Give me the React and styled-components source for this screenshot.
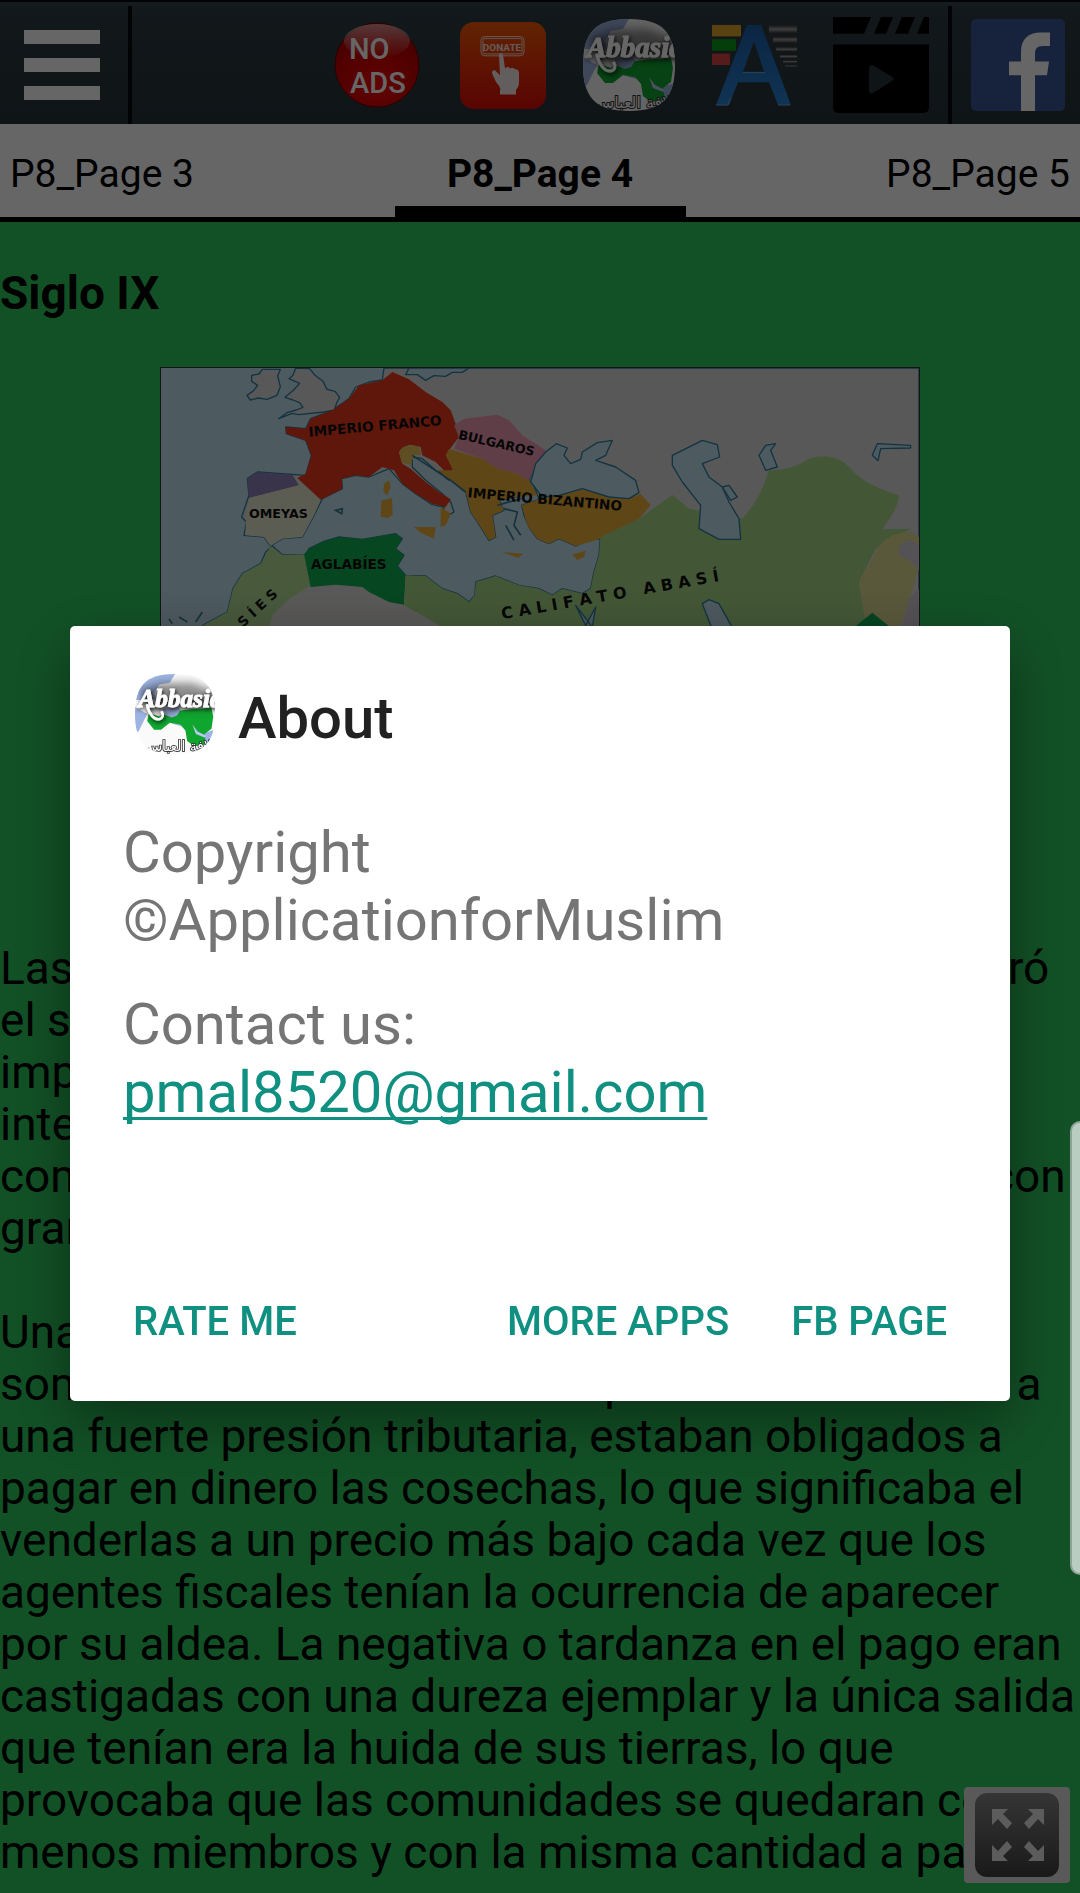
import React from "react";
import styled, { createGlobalStyle } from "styled-components";

const GlobalStyle = createGlobalStyle`
  *, *::before, *::after { box-sizing: border-box; }
  body { margin: 0; background: #2dcb5f; font-family: Roboto, "Liberation Sans", sans-serif; }
  button { font: inherit; border: 0; padding: 0; background: none; cursor: pointer; }
  h1, h2, p { margin: 0; font-weight: inherit; }
`;

const Screen = styled.div`
  height: 100vh;
  overflow: hidden;
  display: flex;
  flex-direction: column;
  background: #2dcb5f;
  color: #000;
`;

const Toolbar = styled.header`
  flex: none;
  height: 124px;
  padding-top: 4px;
  display: flex;
  border-top: 2px solid #04080c;
  background: linear-gradient(#38454d 0, #2f3c44 10px, #27333a 100%);
`;

const ToolButton = styled.button`
  width: ${(p) => p.$width}px;
  display: flex;
  align-items: center;
  justify-content: center;
  svg { display: block; }
`;

const Divider = styled.div`
  width: 4px;
  margin: 0 4px;
  background: #04080c;
`;

const ToolGroup = styled.div`
  margin-left: auto;
  display: flex;
`;

const Tabs = styled.nav`
  flex: none;
  height: 98px;
  display: grid;
  grid-template-columns: 1fr 291px 1fr;
  background: #fff;
  border-bottom: 5px solid #000;
`;

const Tab = styled.button`
  padding: 18px 10px 0;
  font-size: 39px;
  line-height: 48px;
  color: #000;
  text-align: ${(p) => p.$align};
  font-weight: ${(p) => (p.$active ? 700 : 400)};
  border-bottom: 11px solid ${(p) => (p.$active ? "#000" : "transparent")};
`;

const Article = styled.main`
  padding-top: 45px;
  font-size: 46px;
  line-height: 52px;
`;

const Heading = styled.h1`
  font-size: 46px;
  font-weight: 700;
`;

const MapFigure = styled.figure`
  margin: 48px auto 0;
  width: 100%;
  max-width: 760px;
  border: 1px solid #333;
  svg { display: block; width: 100%; height: auto; }
`;

const Paragraph = styled.p`
  white-space: pre-line;
  margin-top: ${(p) => p.$gap}px;
`;

const FullscreenButton = styled.button`
  position: fixed;
  right: 10px;
  bottom: 10px;
  width: 106px;
  height: 96px;
  border-radius: 4px;
  background: #dedede;
  display: flex;
  align-items: center;
  justify-content: center;
`;

const Scrim = styled.div`
  position: fixed;
  inset: 0;
  padding: 134px 70px 0;
  display: flex;
  align-items: center;
  justify-content: center;
  background: rgba(0, 0, 0, 0.6);
`;

const Dialog = styled.section`
  width: 100%;
  max-width: 940px;
  padding: 48px 53px 31px;
  border-radius: 5px;
  background: #fff;
  box-shadow: 0 20px 60px rgba(0, 0, 0, 0.4);
`;

const DialogHeader = styled.div`
  display: flex;
  align-items: flex-end;
  gap: 23px;
  padding-left: 12px;
  svg { display: block; }
`;

const DialogTitle = styled.h2`
  font-size: 58px;
  line-height: 72px;
  font-weight: 500;
  color: #212121;
`;

const DialogBody = styled.div`
  margin: 64px 0 148px;
  display: grid;
  gap: 36px;
  font-size: 58px;
  line-height: 68px;
  color: #757575;
`;

const MailLink = styled.a`
  color: #0f9080;
  text-decoration: underline;
  text-decoration-thickness: 3px;
  text-underline-offset: 5px;
  text-decoration-skip-ink: none;
`;

const Actions = styled.div`
  display: flex;
  gap: 42px;
`;

const ActionButton = styled.button`
  height: 96px;
  padding: 0 10px;
  font-size: 40px;
  line-height: 48px;
  font-weight: 500;
  color: #0f9080;
  margin-right: ${(p) => (p.$pushRest ? "auto" : "0")};
`;

const EdgeHandle = styled.div`
  position: fixed;
  right: 0;
  top: 1121px;
  width: 10px;
  height: 454px;
  border: 2px solid #8ba294;
  border-right: 0;
  border-radius: 10px 0 0 10px;
  background: #b9cdc0;
`;

function MenuIcon() {
  return (
    <svg width="76" height="70" viewBox="0 0 76 70" fill="#fff">
      <rect width="76" height="14" />
      <rect y="28" width="76" height="14" />
      <rect y="56" width="76" height="14" />
    </svg>
  );
}

function NoAdsIcon() {
  return (
    <svg width="86" height="86" viewBox="0 0 86 86">
      <defs>
        <radialGradient id="noAdsBall" cx=".5" cy=".75" r=".75">
          <stop offset="0" stopColor="#f50a0a" />
          <stop offset=".7" stopColor="#c60000" />
          <stop offset="1" stopColor="#a80000" />
        </radialGradient>
        <linearGradient id="noAdsShine" x1="0" y1="0" x2="0" y2="1">
          <stop offset="0" stopColor="#fff" stopOpacity=".55" />
          <stop offset="1" stopColor="#fff" stopOpacity="0" />
        </linearGradient>
      </defs>
      <circle cx="43" cy="43" r="42" fill="url(#noAdsBall)" stroke="#6b0000" />
      <ellipse cx="43" cy="19" rx="33" ry="17" fill="url(#noAdsShine)" />
      <g fill="#fff" fontFamily="Roboto, sans-serif" fontWeight="500" fontSize="29">
        <text x="15" y="37">NO</text>
        <text x="16" y="71">ADS</text>
      </g>
    </svg>
  );
}

function DonateIcon() {
  return (
    <svg width="88" height="87" viewBox="0 0 88 90" preserveAspectRatio="none">
      <defs>
        <linearGradient id="donateBg" x1="0" y1="0" x2="0" y2="1">
          <stop offset="0" stopColor="#f35a08" />
          <stop offset="1" stopColor="#e00a05" />
        </linearGradient>
      </defs>
      <rect x="1" width="86" height="90" rx="14" fill="url(#donateBg)" />
      <rect x="22" y="15" width="43" height="20" rx="4" fill="none" stroke="#f8d8d0" strokeWidth="1" />
      <rect x="24" y="17" width="39" height="16" rx="2" fill="none" stroke="#f8d8d0" strokeWidth="1" />
      <text x="43" y="30" textAnchor="middle" fontFamily="'Liberation Sans Narrow', Roboto, sans-serif" fontWeight="700" fontSize="10" fill="#f8e4de">DONATE</text>
      <path d="M40 34q2-4 4 0l2 14q3-3 5 0q3-2 5 1q3-1 4 3v10q0 6-4 9H42q-1-5-5-9l-4-9q0-4 3-3l5 5z" fill="#f5ecec" />
      <path d="M41 67h16v1.500H41zM41 70h16v5H41z" fill="#f5ecec" />
    </svg>
  );
}

function AbbasidLogo({ width, height, id }) {
  const clip = `abbasid-clip-${id}`;
  const shade = `abbasid-shade-${id}`;
  return (
    <svg width={width} height={height} viewBox="0 0 92 92">
      <defs>
        <clipPath id={clip}>
          <path d="M46 0C80 0 92 14 92 46S80 92 46 92S0 78 0 46S12 0 46 0z" />
        </clipPath>
        <filter id={shade} x="-30%" y="-30%" width="160%" height="160%">
          <feDropShadow dx="1" dy="2" stdDeviation="2.500" floodColor="#000" floodOpacity=".95" />
        </filter>
        <filter id={`${shade}-soft`} x="-30%" y="-30%" width="160%" height="160%">
          <feGaussianBlur stdDeviation="5" />
        </filter>
      </defs>
      <g clipPath={`url(#${clip})`}>
        <rect width="92" height="92" fill="#fafafa" />
        <path d="M0 0h46l-6 10l-12 2l-6 10l4 8H0zM0 38l14 8l-4 8l-6 12H0zM32 40l18-2l6 8l-2 14l-8-2l-12-4zM78 68l14-4v28l-12-8z" fill="#9db4e2" />
        <path d="M52 42l18-2l18-1l2 10l-2 14l-8 6l2 12l-14 2l-8-6l-2-12l-6-7l-12-2l-10 8h-8l-8-10l2-9l12 4l4-3l10 4l6-2z" fill="#0fa630" />
        <path d="M66 58l6 8l10 5l-2 2l-10-4z" fill="#b7c8ee" />
        <path d="M4 18L30 10h36l26 10v20H50L36 48L16 42z" fill="#222" opacity=".5" filter={`url(#${shade}-soft)`} />
        <g filter={`url(#${shade})`}>
          <text x="4" y="38" fontFamily="'Liberation Serif', serif" fontStyle="italic" fontWeight="700" fontSize="29" fill="#fff" stroke="#fff" strokeWidth="1">Abbasid</text>
          <path d="M14 36c2 10 8 17 14 16c4-1 5-5 3-8" fill="none" stroke="#fff" strokeWidth="3" strokeLinecap="round" />
        </g>
        <text x="50" y="89" textAnchor="middle" direction="rtl" fontFamily="'DejaVu Sans', sans-serif" fontSize="16" fill="#fff" stroke="#333" strokeWidth="2" paintOrder="stroke">لافة العباس</text>
      </g>
    </svg>
  );
}

function TextStyleIcon() {
  return (
    <svg width="86" height="82" viewBox="0 0 86 86" preserveAspectRatio="none">
      <defs>
        <linearGradient id="letterBlue" x1="0" y1="0" x2="0" y2="1">
          <stop offset="0" stopColor="#1c5fa8" />
          <stop offset="1" stopColor="#2a80d2" />
        </linearGradient>
        <linearGradient id="barGrey" x1="0" y1="0" x2="0" y2="1">
          <stop offset="0" stopColor="#333" />
          <stop offset=".5" stopColor="#999" />
          <stop offset="1" stopColor="#333" />
        </linearGradient>
      </defs>
      <rect x="0" y="1" width="29" height="12" fill="#dfa52f" />
      <rect x="0" y="16" width="24" height="12" fill="#0c9d1c" />
      <rect x="0" y="31" width="18" height="12" fill="#d64545" />
      <g fill="url(#barGrey)">
        <rect x="57" y="1" width="28" height="9" />
        <rect x="61" y="13" width="24" height="7" />
        <rect x="64" y="24" width="21" height="5" />
        <rect x="68" y="32" width="17" height="4" />
        <rect x="71" y="38" width="14" height="3" />
        <rect x="73" y="43" width="12" height="2" />
      </g>
      <path fillRule="evenodd" d="M4 85L35 1h14l30 84H66L57 61H26L17 85zM31 50h21L42 18z" fill="url(#letterBlue)" />
      <path d="M4 85h12l3-8M66 85h12M31 51h22" fill="none" stroke="#69a9e4" strokeWidth="1" />
    </svg>
  );
}

function ClapperIcon() {
  return (
    <svg width="96" height="96" viewBox="0 0 96 98" preserveAspectRatio="none">
      <path d="M0 0h38l-7 17H0zM48 0h12l-7 17H41zM69 0h13l-7 17H62zM91 0h5v17H84zM0 28h96v64q0 6-6 6H6q-6 0-6-6z" fill="#000" />
      <path d="M36 53q0-6 5-3l18 11q3 2 0 4L41 77q-5 3-5-3z" fill="#27343b" />
    </svg>
  );
}

function FacebookIcon() {
  return (
    <svg width="94" height="92" viewBox="0 0 94 95" preserveAspectRatio="none">
      <rect width="94" height="95" rx="5" fill="#3b5998" />
      <path d="M50 95V58H38V44h12V34c0-13 7-20 20-20h9v14h-7c-6 0-8 3-8 8v8h14l-2 14H64v37z" fill="#fff" />
    </svg>
  );
}

function ExpandIcon() {
  return (
    <svg width="84" height="84" viewBox="0 0 84 84">
      <defs>
        <linearGradient id="expandBg" x1="0" y1="0" x2="0" y2="1">
          <stop offset="0" stopColor="#858585" />
          <stop offset="1" stopColor="#414141" />
        </linearGradient>
      </defs>
      <rect width="84" height="84" rx="12" fill="url(#expandBg)" />
      <g fill="#e6e6e6">
        <path d="M17 16h16l-5 5l9 9l-5 6l-9-10l-6 6z" />
        <path d="M69 16H53l5 5l-9 9l5 6l9-10l6 6z" />
        <path d="M17 68h16l-5-5l9-9l-5-6l-9 10l-6-6z" />
        <path d="M69 68H53l5-5l-9-9l5-6l9 10l6-6z" />
      </g>
    </svg>
  );
}

function HistoryMap() {
  return (
    <svg viewBox="36 38 2274 1440" role="img" aria-label="Mapa del siglo IX">
      <rect x="36" y="38" width="2274" height="1440" fill="#c0e0f0" />
      <g stroke="#2f7fa0" strokeWidth="4" strokeLinejoin="round">
        <path fill="#dfdddb" d="M700 74L705 38H2310V1478H40L90 860L170 805L235 770L252 700L280 655L335 625L350 590L370 572L400 598L470 597L480 580L520 560L570 545L640 552L740 535L760 550L740 580L765 600L745 632L770 660L830 662L880 700L925 715L960 740L978 720L980 680L1040 662L1110 690L1170 700L1210 720L1240 700L1300 715L1325 700L1335 650L1350 600L1354 550L1320 555L1280 572L1230 550L1200 565L1165 550L1140 515L1125 480L1118 450L1170 432L1150 380L1162 320L1130 400L1100 425L1050 435L1065 465L1030 480L1040 545L1020 555L985 500L965 470L950 410L905 375L860 345L820 310L790 305L790 335L830 375L880 415L905 440L915 470L880 490L885 455L850 448L800 415L760 385L720 340L660 365L620 360L578 370L580 400L520 430L495 480L460 545L400 550L365 572L345 545L285 540L292 500L278 485L300 420L295 370L325 350L470 360L487 300L470 255L412 235L410 215L470 220L485 190L550 165L600 130L620 95L660 80z" />
        <path fill="#dfdddb" d="M440 38l-8 22l-12 10l32 14l-18 20l-26 22l24 8l20 8l10 14l-20 8l-28 8l-25 18l40-16l20 4l75-8l32-6l8-24l8-14l-14-18l-24-6l-12-24l-24-18l-16-20z" />
        <path fill="#dfdddb" d="M340 42l-10 14l-22 4v18l18 12l-12 16l-20 14l10 14l24-6l26 4l30-12l10-26l-8-32l8-20z" />
        <path fill="#c0e0f0" d="M780 38l-10 20h35l25 17l25-14l35 2l20-12h30l20-13z" />
      </g>
      <path fill="#ee3a1e" d="M485 190L550 165L600 130L630 90L700 75L730 50L780 72L830 110L880 140L905 165L920 205L930 245L900 285L912 345L890 350L860 320L820 300L815 275L780 268L750 290L760 325L785 340L830 380L870 410L905 432L890 455L850 445L800 415L760 385L735 345L700 335L660 365L620 360L578 370L580 400L515 433L445 368L470 355L487 300L470 255L412 235L410 215L470 220z" />
      <path fill="#e9c25a" d="M750 290Q760 268 790 270Q820 272 815 300L795 300L785 328L758 322z" />
      <path fill="#9282bc" d="M295 370L325 350L430 358L450 390L300 428z" />
      <path fill="#e4e6cc" d="M300 428L450 390L440 368L515 435L495 480L460 545L400 550L365 572L345 545L290 540L290 500z" />
      <path fill="#ee9bb4" d="M915 210L945 190L1045 178L1080 195L1120 240L1190 285L1165 325L1140 375L1090 350L1045 340L1000 310L915 280L930 245z" />
      <path fill="#eeae38" d="M900 280L1000 310L1045 340L1090 350L1140 375L1165 420L1100 425L1050 435L1065 465L1030 480L1040 545L1020 555L985 500L965 470L950 410L905 375L865 345L912 345L890 300zM1170 432L1230 420L1290 400L1350 415L1380 428L1440 430L1475 415L1505 450L1470 490L1410 525L1340 555L1280 572L1230 550L1200 565L1165 550L1135 510L1118 450zM697 436l32-8l2 50l-14 10l-22-4zM705 385l15-10l5 20l-10 25l-12-10zM795 515l65 0l-5 35l-40-18zM875 455l30 20l-15 35l-15 5zM1058 590l65 5l-15 12zM1270 598l40-12l-5 20l-20 8z" />
      <path fill="#b4de96" d="M365 572L400 598L465 597L485 690L420 730L370 780L340 900L40 1478L90 860L170 805L235 770L252 700L280 655L335 625z" />
      <path fill="#0fae50" d="M465 597L480 580L520 560L570 545L640 552L740 535L760 550L740 580L765 600L745 632L770 660L765 748L720 740L660 710L640 695L560 688L485 695z" />
      <path fill="#a8da88" d="M770 660L830 662L880 700L925 715L960 740L978 720L980 680L1040 662L1110 690L1170 700L1210 720L1240 700L1300 715L1325 700L1335 650L1350 600L1354 545L1470 490L1570 418L1620 460L1780 490Q1835 430 1860 345Q1930 345 1980 310Q2060 285 2110 345Q2150 390 2250 420Q2250 455 2200 522L2285 520L2180 580L2130 680L2150 800L2200 1478H1300L1000 860L880 815L765 750z" />
      <path fill="#e0dc94" d="M2285 530Q2200 530 2170 610L2130 680L2150 800L2200 870L2260 800L2310 640V545z" />
      <path fill="#d4ccd6" d="M2250 570l30-15l30 10v80l-30-30l-30-15zM2310 700l-30 30l-20 80v60h50z" />
      <path fill="#0fae50" d="M2110 820l60-48l60 48v40h-120z" />
      <g fill="#c0e0f0" stroke="#2f7fa0" strokeWidth="4" strokeLinejoin="round">
        <path d="M1145 380L1160 325L1190 290L1222 265L1255 278L1245 300L1265 325L1295 312L1300 290L1345 262L1390 255L1370 300L1340 315L1400 335L1460 375L1470 412L1440 430L1380 425L1300 400L1230 420L1180 425z" />
        <path d="M1570 300L1600 285L1660 255L1705 268L1712 305L1660 325L1680 365L1720 395L1740 440L1770 490L1775 552L1710 552L1650 520L1655 450L1600 380L1570 330z" />
        <path d="M1720 395l20-5l25 35l-20 10z" />
        <path d="M1830 300l20-30l30-5l-15 20l20 50l-35 10z" />
        <path d="M2170 300l15-35l100 5l0 8l-90 2l-8 36z" />
        <path d="M1660 745l20-12l30 12l50 90h-65z" />
        <path d="M1280 750l30 60l30-55l-10 60z" />
      </g>
      <path d="M790 300L905 375L950 410M870 350l30 25M1065 460l40 10l-10 40l20 30M1070 510l25 45M560 465l20-5l-2 15zM60 790l10 15M90 785l25 15M140 800l20-30M1045 450l70-20" fill="none" stroke="#3a7d93" strokeWidth="5" />
      <g fill="#101010" fontFamily="'DejaVu Sans', sans-serif" fontWeight="700" fontSize="41">
        <text x="480" y="244" transform="rotate(-5 480 244)">IMPERIO FRANCO</text>
        <text x="926" y="250" fontSize="38" transform="rotate(13 926 250)">BULGAROS</text>
        <text x="955" y="426" transform="rotate(5 955 426)">IMPERIO BIZANTINO</text>
        <text x="300" y="487" fontSize="38">OMEYAS</text>
        <text x="486" y="640">AGLABÍES</text>
        <text x="1060" y="792" fontSize="48" transform="rotate(-10 1060 792)" xmlSpace="preserve">C A L I F A T O   A B A S Í</text>
        <text x="282" y="818" transform="rotate(-43 282 818)">S Í E S</text>
      </g>
    </svg>
  );
}

const uprising = `Las deudas fiscales y el malestar social que generó
el sistema de recaudación impuesto en todo el
imperio provocaron numerosas revueltas en el
interior de las provincias, que los califas
combatieron enviando a sus ejércitos a menudo con
gran dureza.`;

const peasants = `Una parte de los campesinos vivía muy mal,
sometidos como estaban sin perdón ni descanso a
una fuerte presión tributaria, estaban obligados a
pagar en dinero las cosechas, lo que significaba el
venderlas a un precio más bajo cada vez que los
agentes fiscales tenían la ocurrencia de aparecer
por su aldea. La negativa o tardanza en el pago eran
castigadas con una dureza ejemplar y la única salida
que tenían era la huida de sus tierras, lo que
provocaba que las comunidades se quedaran con
menos miembros y con la misma cantidad a pagar.`;

export default function App() {
  return (
    <>
      <GlobalStyle />
      <Screen>
        <Toolbar>
          <ToolButton $width={124} aria-label="Menu"><MenuIcon /></ToolButton>
          <Divider />
          <ToolGroup>
            <ToolButton $width={126} aria-label="No ads"><NoAdsIcon /></ToolButton>
            <ToolButton $width={126} aria-label="Donate"><DonateIcon /></ToolButton>
            <ToolButton $width={126} aria-label="Abbasid"><AbbasidLogo id="bar" width={92} height={92} /></ToolButton>
            <ToolButton $width={126} aria-label="Text style"><TextStyleIcon /></ToolButton>
            <ToolButton $width={126} aria-label="Videos"><ClapperIcon /></ToolButton>
          </ToolGroup>
          <Divider />
          <ToolButton $width={124} aria-label="Facebook"><FacebookIcon /></ToolButton>
        </Toolbar>
        <Tabs>
          <Tab $align="left">P8_Page 3</Tab>
          <Tab $align="center" $active>P8_Page 4</Tab>
          <Tab $align="right">P8_Page 5</Tab>
        </Tabs>
        <Article>
          <Heading>Siglo IX</Heading>
          <MapFigure><HistoryMap /></MapFigure>
          <Paragraph $gap={93}>{uprising}</Paragraph>
          <Paragraph $gap={52}>{peasants}</Paragraph>
        </Article>
        <FullscreenButton aria-label="Fullscreen"><ExpandIcon /></FullscreenButton>
      </Screen>
      <Scrim>
        <Dialog role="dialog" aria-labelledby="about-title">
          <DialogHeader>
            <AbbasidLogo id="dialog" width={80} height={80} />
            <DialogTitle id="about-title">About</DialogTitle>
          </DialogHeader>
          <DialogBody>
            <p>Copyright<br />©ApplicationforMuslim</p>
            <p>Contact us:<br /><MailLink href="mailto:pmal8520@gmail.com">pmal8520@gmail.com</MailLink></p>
          </DialogBody>
          <Actions>
            <ActionButton $pushRest>RATE ME</ActionButton>
            <ActionButton>MORE APPS</ActionButton>
            <ActionButton>FB PAGE</ActionButton>
          </Actions>
        </Dialog>
      </Scrim>
      <EdgeHandle />
    </>
  );
}
